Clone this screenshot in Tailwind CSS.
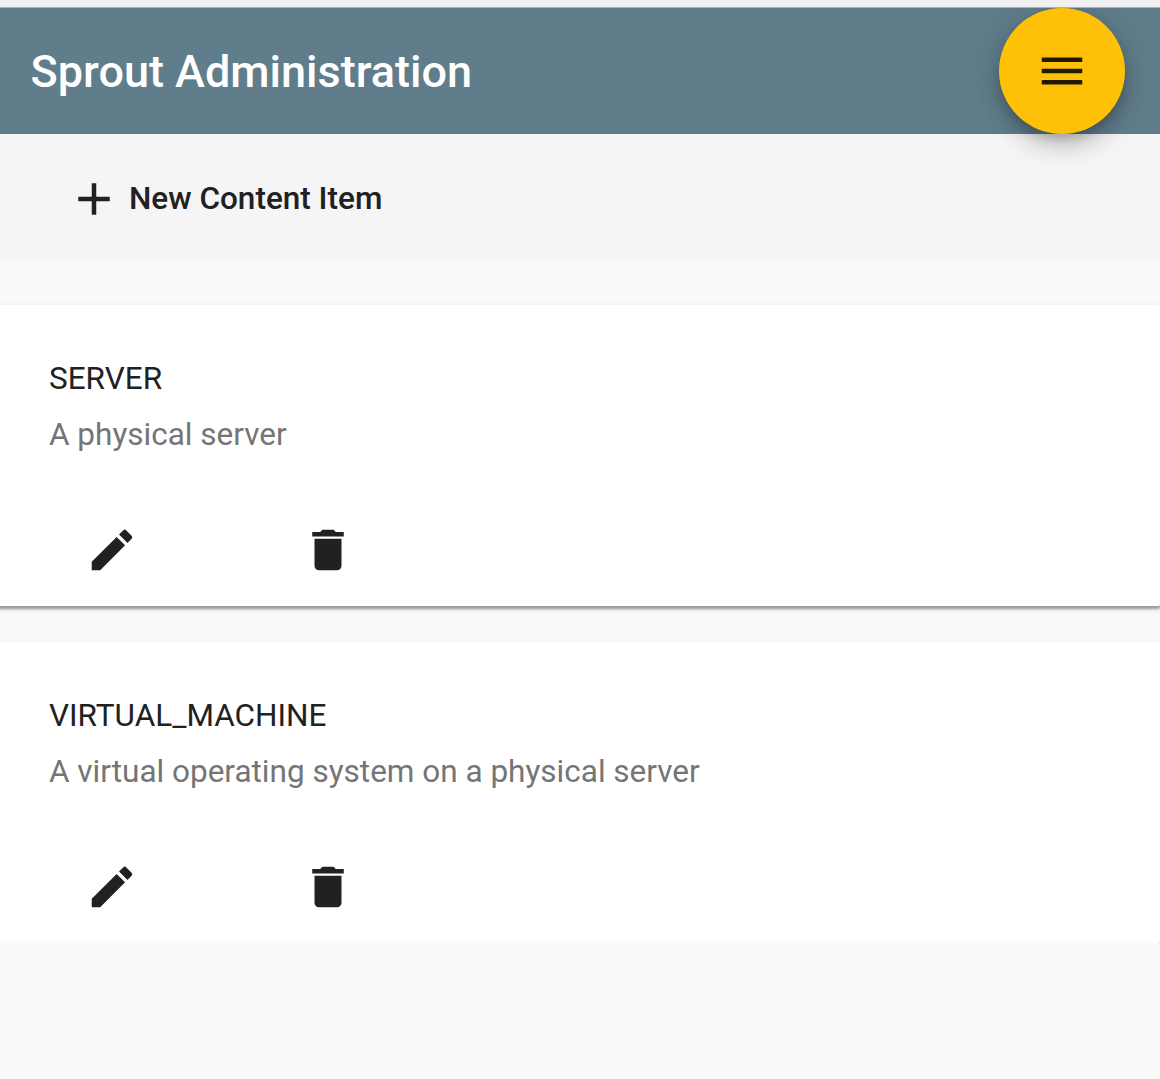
<!DOCTYPE html>
<html lang="en">
<head>
<meta charset="utf-8">
<title>Sprout Administration</title>
<script src="https://cdn.jsdelivr.net/npm/@tailwindcss/browser@4"></script>
</head>
<body class="h-screen overflow-hidden bg-[#fafafa] font-['Roboto',sans-serif] text-[#212121] flex flex-col">
<div class="h-2 shrink-0 bg-[#f1f1f1] border-b border-[#b0b0b0] relative z-20"></div>
<header class="h-[126px] shrink-0 bg-[#607d8b] flex items-center justify-between pl-[30.5px] pr-[35px] relative z-10">
  <h1 class="pt-0.5 text-[45px] leading-[54px] font-medium text-white">Sprout Administration</h1>
  <button aria-label="Menu" class="size-[126px] rounded-full bg-[#ffc107] flex items-center justify-center text-black/87 shadow-[0_6.75px_11.25px_-2.25px_rgba(0,0,0,0.2),0_13.5px_22.5px_0_rgba(0,0,0,0.14),0_2.25px_40.5px_0_rgba(0,0,0,0.12)]">
    <svg class="size-[54px]" viewBox="0 0 24 24" fill="currentColor"><path d="M3 18h18v-2H3v2zm0-5h18v-2H3v2zm0-7v2h18V6H3z"/></svg>
  </button>
</header>
<nav class="h-[126px] shrink-0 bg-[#f5f5f5] flex items-center pt-1 pl-[67px]">
  <button class="flex items-center gap-2 text-[31.5px] font-medium">
    <svg class="size-[54px]" viewBox="0 0 24 24" fill="currentColor"><path d="M19 13h-6v6h-2v-6H5v-2h6V5h2v6h6v2z"/></svg>
    <span>New Content Item</span>
  </button>
</nav>
<main class="pt-[45px] flex flex-col gap-9 h-[683px] shrink-0 overflow-hidden">
  <article class="h-[301px] shrink-0 -ml-[5px] -mr-0.5 bg-white rounded-[4.5px] pt-[46px] pl-[54px] text-[31.5px] leading-14 shadow-[0_4.5px_2.25px_-2.25px_rgba(0,0,0,0.2),0_2.25px_2.25px_0_rgba(0,0,0,0.14),0_2.25px_6.75px_0_rgba(0,0,0,0.12)]">
    <h2>SERVER</h2>
    <p class="text-[#757575]">A physical server</p>
    <div class="flex gap-[162px] pt-[60px] pl-9">
      <svg class="size-[54px]" viewBox="0 0 24 24" fill="currentColor"><path d="M3 17.25V21h3.75L17.81 9.94l-3.75-3.75L3 17.25zM20.71 7.04a1 1 0 0 0 0-1.41l-2.34-2.34a1 1 0 0 0-1.41 0l-1.83 1.83 3.75 3.75 1.83-1.83z"/></svg>
      <svg class="size-[54px]" viewBox="0 0 24 24" fill="currentColor"><path d="M6 19c0 1.1.9 2 2 2h8c1.1 0 2-.9 2-2V7H6v12zM19 4h-3.5l-1-1h-5l-1 1H5v2h14V4z"/></svg>
    </div>
  </article>
  <article class="h-[301px] shrink-0 -ml-[5px] -mr-0.5 bg-white rounded-[4.5px] pt-[46px] pl-[54px] text-[31.5px] leading-14 shadow-[0_4.5px_2.25px_-2.25px_rgba(0,0,0,0.2),0_2.25px_2.25px_0_rgba(0,0,0,0.14),0_2.25px_6.75px_0_rgba(0,0,0,0.12)]">
    <h2>VIRTUAL_MACHINE</h2>
    <p class="text-[#757575]">A virtual operating system on a physical server</p>
    <div class="flex gap-[162px] pt-[60px] pl-9">
      <svg class="size-[54px]" viewBox="0 0 24 24" fill="currentColor"><path d="M3 17.25V21h3.75L17.81 9.94l-3.75-3.75L3 17.25zM20.71 7.04a1 1 0 0 0 0-1.41l-2.34-2.34a1 1 0 0 0-1.41 0l-1.83 1.83 3.75 3.75 1.83-1.83z"/></svg>
      <svg class="size-[54px]" viewBox="0 0 24 24" fill="currentColor"><path d="M6 19c0 1.1.9 2 2 2h8c1.1 0 2-.9 2-2V7H6v12zM19 4h-3.5l-1-1h-5l-1 1H5v2h14V4z"/></svg>
    </div>
  </article>
</main>
</body>
</html>
